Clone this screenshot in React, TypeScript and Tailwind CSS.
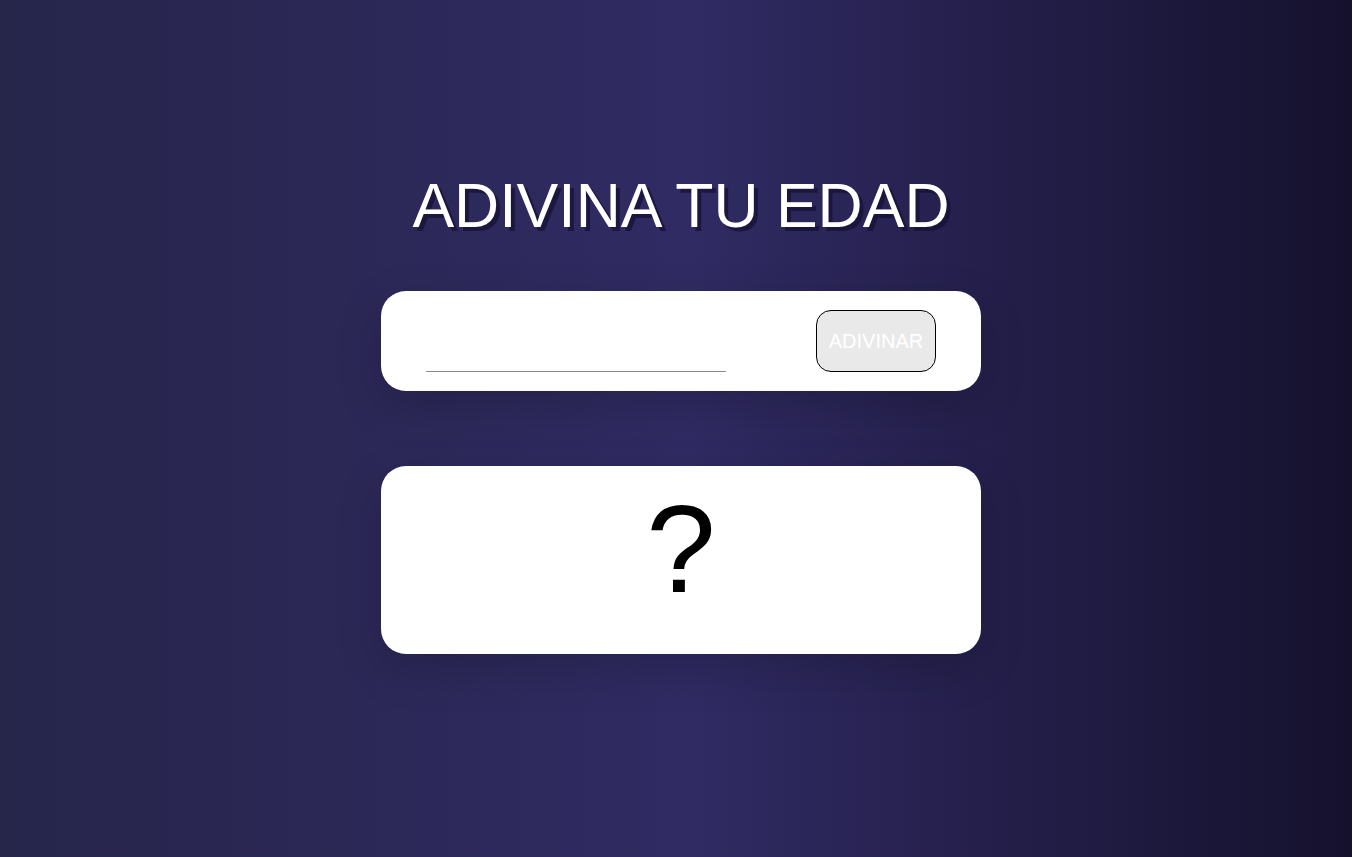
import React from "react";

export default function App() {
  return (
    <div className="min-h-[857px] w-full bg-[linear-gradient(to_right,#26254a,#302b63_51%,#15112d)] font-['Liberation_Sans',Arial,sans-serif]">
      <div className="ml-[381px] flex w-[600px] flex-col pt-[170px]">
        <h1 className="text-center text-[62.5px] leading-[70px] text-white [text-shadow:4px_4px_0_rgba(20,16,50,0.7)]">
          ADIVINA TU EDAD
        </h1>
        <div className="mt-[51px] flex h-[100px] items-end justify-between rounded-[25px] bg-white px-[45px] pb-[19px] shadow-[0_15px_45px_rgba(0,0,0,0.18)]">
          <input
            type="text"
            className="h-[40px] w-[300px] border-0 border-b border-[#8a8a8a] bg-transparent text-[20px] outline-none"
          />
          <button className="h-[62px] w-[120px] rounded-[15px] border border-black bg-[#e9e9e9] text-[20px] text-white">
            ADIVINAR
          </button>
        </div>
        <div className="mt-[75px] flex h-[188px] items-start justify-center rounded-[25px] bg-white pt-[20px] shadow-[0_15px_45px_rgba(0,0,0,0.18)]">
          <span className="text-[125px] leading-[125px] text-black">?</span>
        </div>
      </div>
    </div>
  );
}
